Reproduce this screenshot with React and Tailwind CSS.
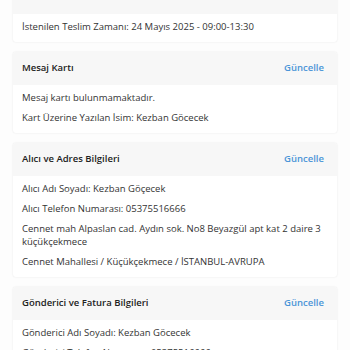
import React from "react";

const sections = [
  {
    title: "Teslimat Tarihi ve Saati",
    lines: ["İstenilen Teslim Zamanı: 24 Mayıs 2025 - 09:00-13:30"],
  },
  {
    title: "Mesaj Kartı",
    lines: ["Mesaj kartı bulunmamaktadır.", "Kart Üzerine Yazılan İsim: Kezban Göcecek"],
  },
  {
    title: "Alıcı ve Adres Bilgileri",
    lines: [
      "Alıcı Adı Soyadı: Kezban Göçecek",
      "Alıcı Telefon Numarası: 05375516666",
      "Cennet mah Alpaslan cad. Aydın sok. No8 Beyazgül apt kat 2 daire 3 küçükçekmece",
      "Cennet Mahallesi / Küçükçekmece / İSTANBUL-AVRUPA",
    ],
  },
  {
    title: "Gönderici ve Fatura Bilgileri",
    lines: ["Gönderici Adı Soyadı: Kezban Göcecek", "Gönderici Telefon Numarası: 05375516666"],
  },
];

function Section({ title, lines }) {
  return (
    <div className="bg-white rounded-[3px] shadow-[0_0_2px_rgba(0,0,0,0.1)] overflow-hidden">
      {/* HEADER */}
      <div className="h-[33px] bg-[#f7f7f7] flex items-center justify-between pl-[9px] pr-[13px]">
        <span className="text-[9.5px] font-semibold text-[#222]">{title}</span>
        <span className="text-[9.5px] font-semibold text-[#4b95d8]">Güncelle</span>
      </div>

      {/* BODY */}
      <div className="pl-[9px] pr-[10px] pt-[6px] pb-[9px] flex flex-col gap-[7px]">
        {lines.map((l) => (
          <p key={l} className="text-[9.5px] leading-[13px] text-[#333]">
            {l}
          </p>
        ))}
      </div>
    </div>
  );
}

export default function App() {
  return (
    <div
      className="h-[350px] w-[350px] overflow-hidden bg-[#fdfdfd]"
      style={{ fontFamily: '"Open Sans", sans-serif' }}
    >
      <div className="-mt-[19px] px-[13px] flex flex-col gap-[10px]">
        {sections.map((s) => (
          <Section key={s.title} {...s} />
        ))}
      </div>
    </div>
  );
}
